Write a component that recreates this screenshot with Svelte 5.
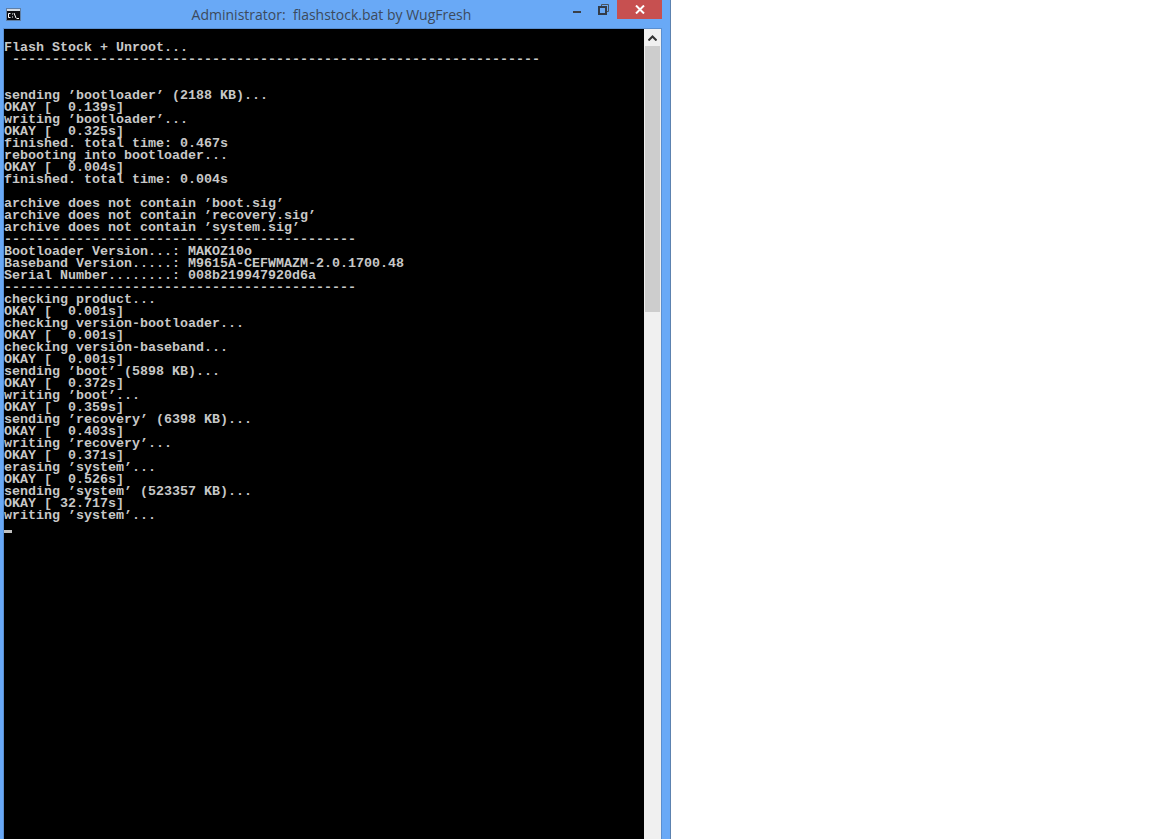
<script>
	const dash44 = "-".repeat(44);
	const lines = [
		"",
		"Flash Stock + Unroot...",
		" " + "-".repeat(66),
		"",
		"",
		"sending ’bootloader’ (2188 KB)...",
		"OKAY [  0.139s]",
		"writing ’bootloader’...",
		"OKAY [  0.325s]",
		"finished. total time: 0.467s",
		"rebooting into bootloader...",
		"OKAY [  0.004s]",
		"finished. total time: 0.004s",
		"",
		"archive does not contain ’boot.sig’",
		"archive does not contain ’recovery.sig’",
		"archive does not contain ’system.sig’",
		dash44,
		"Bootloader Version...: MAKOZ10o",
		"Baseband Version.....: M9615A-CEFWMAZM-2.0.1700.48",
		"Serial Number........: 008b219947920d6a",
		dash44,
		"checking product...",
		"OKAY [  0.001s]",
		"checking version-bootloader...",
		"OKAY [  0.001s]",
		"checking version-baseband...",
		"OKAY [  0.001s]",
		"sending ’boot’ (5898 KB)...",
		"OKAY [  0.372s]",
		"writing ’boot’...",
		"OKAY [  0.359s]",
		"sending ’recovery’ (6398 KB)...",
		"OKAY [  0.403s]",
		"writing ’recovery’...",
		"OKAY [  0.371s]",
		"erasing ’system’...",
		"OKAY [  0.526s]",
		"sending ’system’ (523357 KB)...",
		"OKAY [ 32.717s]",
		"writing ’system’...",
	];
</script>

<div class="window">
	<div class="titlebar">
		<svg class="app-icon" width="15" height="13" viewBox="0 0 15 13">
			<rect width="15" height="13" fill="#5f7fa6" />
			<rect x="1" y="1" width="13" height="2" fill="#d5dbe3" />
			<rect x="1" y="3" width="13" height="9" fill="#0c0c10" />
			<path d="M4.5 5.5H2.5V9.5H4.5M6.5 5.5V6.5M6.5 8.5V9.5M8 5L10 10M10.5 10.5H13" stroke="#fff" fill="none" />
		</svg>
		<div class="title">Administrator:  flashstock.bat by WugFresh</div>
		<div class="controls">
			<div class="ctl"><span class="min"></span></div>
			<div class="ctl">
				<svg width="11" height="11" viewBox="0 0 11 11">
					<path d="M3.5 2.5V0.5H10.5V7.5H8.5" fill="none" stroke="#4a5560" />
					<rect x="1" y="3" width="7" height="7" fill="none" stroke="#333c48" stroke-width="2" />
				</svg>
			</div>
			<div class="close">
				<svg width="10" height="9" viewBox="0 0 10 9">
					<path d="M1 0.5L9 8.5M9 0.5L1 8.5" stroke="#fff" stroke-width="2" />
				</svg>
			</div>
		</div>
	</div>
	<div class="client">
		<div class="console">
			{#each lines as line}
				<div class="line">{line}</div>
			{/each}
			<div class="line"><span class="cursor"></span></div>
		</div>
		<div class="scrollbar">
			<div class="arrow">
				<svg width="9" height="6" viewBox="0 0 9 6">
					<path d="M0.5 5.5L4.5 1.5L8.5 5.5" fill="none" stroke="#333" stroke-width="2" />
				</svg>
			</div>
			<div class="thumb"></div>
		</div>
	</div>
</div>

<style>
	:global(body) {
		background: #fff;
		overflow: hidden;
	}

	.window {
		width: 671px;
		height: 839px;
		box-sizing: border-box;
		background: #69a9f6;
		border-right: 1px solid #5c82b0;
		display: flex;
		flex-direction: column;
	}

	.titlebar {
		height: 28px;
		display: flex;
		align-items: flex-start;
		flex: none;
	}

	.app-icon {
		margin: 8px 0 0 6px;
	}

	.title {
		flex: 1;
		text-align: center;
		font-family: "Open Sans", "Noto Sans", sans-serif;
		font-size: 14px;
		line-height: 29px;
		color: #3c4a5c;
		white-space: pre;
		padding-left: 79px;
	}

	.controls {
		display: flex;
		margin-right: 8px;
	}

	.ctl {
		width: 27px;
		height: 19px;
		display: flex;
		align-items: center;
		justify-content: center;
	}

	.min {
		width: 8px;
		height: 2px;
		margin-top: 5px;
		margin-left: 1px;
		background: #3a4048;
	}

	.close {
		width: 45px;
		height: 19px;
		background: #c75050;
		display: flex;
		align-items: center;
		justify-content: center;
	}

	.client {
		flex: 1;
		display: flex;
		min-height: 0;
		margin: 0 8px 0 3px;
		border: 1px solid #5a8fd0;
		border-bottom: 0;
	}

	.console {
		width: 640px;
		background: #000;
		color: #c8c8c8;
		font-family: "Liberation Mono", monospace;
		font-size: 13.33px;
		font-weight: 700;
		line-height: 12px;
		padding-top: 1px;
		box-sizing: border-box;
	}

	.line {
		height: 12px;
		white-space: pre;
	}

	.cursor {
		display: block;
		width: 8px;
		height: 3px;
		position: relative;
		top: 8px;
		background: #c0c0c0;
	}

	.scrollbar {
		width: 17px;
		background: #f0f0f0;
	}

	.arrow {
		height: 17px;
		display: flex;
		align-items: center;
		justify-content: center;
	}

	.thumb {
		width: 15px;
		height: 266px;
		margin-left: 1px;
		background: #cdcdcd;
	}
</style>
